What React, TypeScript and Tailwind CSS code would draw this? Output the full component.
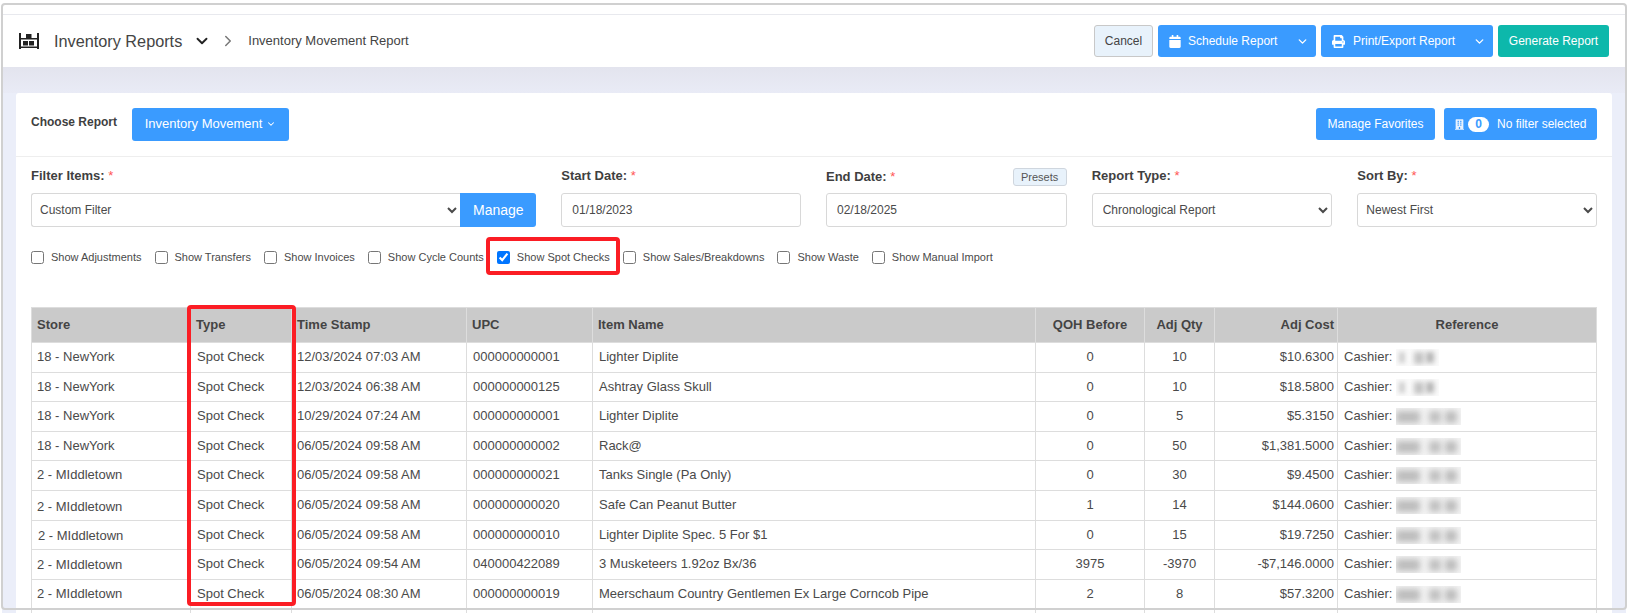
import { ChevronDown, ChevronRight } from 'lucide-react';
import { FaBuilding, FaCalendar, FaPrint } from 'react-icons/fa';

const tall = 'h-[30px] [&>td]:pb-[1px]';
const low = 'h-[29px]';

const rows = [
  { store: '18 - NewYork', sc: 'pl-[5px]', time: '12/03/2024 07:03 AM', upc: '000000000001', item: 'Lighter Diplite', qoh: '0', qty: '10', cost: '$10.6300', blur: 'short', h: tall },
  { store: '18 - NewYork', sc: 'pl-[5px]', time: '12/03/2024 06:38 AM', upc: '000000000125', item: 'Ashtray Glass Skull', qoh: '0', qty: '10', cost: '$18.5800', blur: 'short', h: low },
  { store: '18 - NewYork', sc: 'pl-[5px]', time: '10/29/2024 07:24 AM', upc: '000000000001', item: 'Lighter Diplite', qoh: '0', qty: '5', cost: '$5.3150', blur: 'long', h: tall },
  { store: '18 - NewYork', sc: 'pl-[5px]', time: '06/05/2024 09:58 AM', upc: '000000000002', item: 'Rack@', qoh: '0', qty: '50', cost: '$1,381.5000', blur: 'long', h: low },
  { store: '2 - MIddletown', sc: 'pl-[5px]', time: '06/05/2024 09:58 AM', upc: '000000000021', item: 'Tanks Single (Pa Only)', qoh: '0', qty: '30', cost: '$9.4500', blur: 'long', h: tall },
  { store: '2 - MIddletown', sc: 'pl-[5px] pt-[4px]', time: '06/05/2024 09:58 AM', upc: '000000000020', item: 'Safe Can Peanut Butter', qoh: '1', qty: '14', cost: '$144.0600', blur: 'long', h: tall },
  { store: '2 - MIddletown', sc: 'pl-[6px] pt-[2px]', time: '06/05/2024 09:58 AM', upc: '000000000010', item: 'Lighter Diplite Spec. 5 For $1', qoh: '0', qty: '15', cost: '$19.7250', blur: 'long', h: low },
  { store: '2 - MIddletown', sc: 'pl-[5px] pt-[2px]', time: '06/05/2024 09:54 AM', upc: '040000422089', item: '3 Musketeers 1.92oz Bx/36', qoh: '3975', qty: '-3970', cost: '-$7,146.0000', blur: 'long', h: tall },
  { store: '2 - MIddletown', sc: 'pl-[5px]', time: '06/05/2024 08:30 AM', upc: '000000000019', item: 'Meerschaum Country Gentlemen Ex Large Corncob Pipe', qoh: '2', qty: '8', cost: '$57.3200', blur: 'long', h: low },
];

const filters = ['Show Adjustments', 'Show Transfers', 'Show Invoices', 'Show Cycle Counts', 'Show Spot Checks', 'Show Sales/Breakdowns', 'Show Waste', 'Show Manual Import'];

function ShelfIcon() {
  return (
    <svg viewBox="0 0 20 16" className="w-5 h-4 text-[#222]" fill="currentColor">
      <path d="M0 0h2v16H0zM18 0h2v16h-2zM2 13.5h16V15H2zM2 5h16v1.5H2zM7 1h5.5v4H7zM4 8h5v4.5H4zM10 8h5v4.5h-5z" />
    </svg>
  );
}

function BlurName({ kind }: { kind: string }) {
  if (kind === 'short') {
    return (
      <span className="inline-flex w-[43px] h-[17px] overflow-hidden items-center gap-[9px] align-middle bg-[#fafafa]">
        <span className="w-[6px] h-[11px] bg-[#d0d0d0] blur-[2px] ml-[3px]" />
        <span className="w-[10px] h-[12px] bg-[#c4c4c4] blur-[2.5px]" />
        <span className="w-[8px] h-[11px] bg-[#b4b4b4] blur-[2.5px] -ml-[7px]" />
      </span>
    );
  }
  return (
    <span className="inline-flex w-[65px] h-[17px] overflow-hidden items-center gap-[9px] align-middle bg-[#f4f4f4]">
      <span className="w-[24px] h-[12px] bg-[#bcbcbc] blur-[3px]" />
      <span className="w-[12px] h-[12px] bg-[#c0c0c0] blur-[3px]" />
      <span className="w-[12px] h-[12px] bg-[#bcbcbc] blur-[3px] -ml-[5px]" />
    </span>
  );
}

function Label({ text }: { text: string }) {
  return (
    <label className="block text-[13px] font-bold text-[#3f3f3f] leading-4">
      {text} <span className="text-[#f55] font-normal">*</span>
    </label>
  );
}

export default function App() {
  return (
    <div className="relative w-[1628px] h-[613px] overflow-hidden bg-white pt-[4px] pl-[2px] pr-[2px] text-[#4a4a4a] font-['Liberation_Sans',Arial,sans-serif]">
      <div className="h-[11px] border-b border-[#e8e9ee]" />
      <header className="h-[52px] flex items-center pl-[17px] pr-[17px]">
        <ShelfIcon />
        <span className="ml-[15px] text-[16.25px] text-[#444]">Inventory Reports</span>
        <ChevronDown className="ml-[11px] w-[18px] h-[18px] text-[#222]" strokeWidth={2.5} />
        <ChevronRight className="ml-[8px] w-[18px] h-[18px] text-[#777]" strokeWidth={2} />
        <span className="ml-[11px] text-[13px] text-[#444]">Inventory Movement Report</span>
        <div className="ml-auto flex items-center gap-[5px] text-[12px] text-white">
          <button className="h-[32px] w-[59px] rounded-[3px] border border-[#c8c8c8] bg-[#e8f2fb] text-[#444]">Cancel</button>
          <div className="h-[32px] w-[158px] rounded-[3px] bg-[#3a9bff] flex items-center pl-[11px]">
            <FaCalendar className="w-[12px] h-[13px]" />
            <span className="ml-[7px]">Schedule Report</span>
            <ChevronDown className="ml-auto mr-[7px] w-[13px] h-[13px]" strokeWidth={2.5} />
          </div>
          <div className="h-[32px] w-[172px] rounded-[3px] bg-[#3a9bff] flex items-center pl-[11px]">
            <FaPrint className="w-[13px] h-[13px]" />
            <span className="ml-[8px]">Print/Export Report</span>
            <ChevronDown className="ml-auto mr-[7px] w-[13px] h-[13px]" strokeWidth={2.5} />
          </div>
          <button className="h-[32px] w-[111px] rounded-[3px] bg-[#0db8ab]">Generate Report</button>
        </div>
      </header>
      <div className="bg-[#ebeef9] h-[546px]">
        <div className="h-[26px] bg-linear-to-b from-[#e3e4ee] to-[#e9ebf6]" />
        <main className="mx-[14px] bg-white rounded-t-[3px] h-[520px] overflow-hidden">
          <div className="h-[64px] pb-[1px] flex items-center pl-[15px] pr-[15px] border-b border-[#eeeeee]">
            <span className="text-[12px] font-bold text-[#3f3f3f] -mt-[4px]">Choose Report</span>
            <button className="ml-[15px] h-[33px] w-[157px] rounded-[3px] bg-[#3a9bff] text-white text-[13px] flex items-center justify-center gap-[4px]">
              Inventory Movement
              <ChevronDown className="w-[10px] h-[10px]" strokeWidth={2.5} />
            </button>
            <div className="ml-auto flex gap-[9px] text-[12px] text-white">
              <button className="h-[32px] w-[119px] rounded-[3px] bg-[#3a9bff]">Manage Favorites</button>
              <div className="h-[32px] w-[153px] rounded-[3px] bg-[#3a9bff] flex items-center pl-[11px]">
                <FaBuilding className="w-[9px] h-[13px] text-[#e8f2ff]" />
                <span className="ml-[4px] w-[21px] h-[15px] rounded-full bg-white text-[#3a9bff] font-bold text-[12px] flex items-center justify-center">0</span>
                <span className="ml-[8px]">No filter selected</span>
              </div>
            </div>
          </div>
          <div className="px-[15px] pt-[11px] flex gap-[25px] items-start">
            <div className="w-[506px]">
              <Label text="Filter Items:" />
              <div className="mt-[9px] flex h-[34px]">
                <select className="flex-1 min-w-0 rounded-l-[3px] border border-r-0 border-[#d8d8d8] bg-white pl-[4px] text-[12px] text-[#4a4a4a]">
                  <option>Custom Filter</option>
                </select>
                <button className="w-[76px] rounded-r-[3px] bg-[#3a9bff] text-white text-[14px]">Manage</button>
              </div>
            </div>
            <div className="w-[240px]">
              <Label text="Start Date:" />
              <input readOnly value="01/18/2023" className="mt-[9px] h-[34px] w-full rounded-[3px] border border-[#d8d8d8] pl-[10px] text-[12px] text-[#4a4a4a]" />
            </div>
            <div className="w-[241px]">
              <div className="flex items-center justify-between">
                <Label text="End Date:" />
                <button className="h-[18px] w-[54px] rounded-[3px] border border-[#cfd6de] bg-[#e8f2fb] text-[11px] text-[#555]">Presets</button>
              </div>
              <input readOnly value="02/18/2025" className="mt-[7px] h-[34px] w-full rounded-[3px] border border-[#d8d8d8] pl-[10px] text-[12px] text-[#4a4a4a]" />
            </div>
            <div className="w-[241px]">
              <Label text="Report Type:" />
              <select className="mt-[9px] h-[34px] w-full rounded-[3px] border border-[#d8d8d8] bg-white pl-[6px] text-[12px] text-[#4a4a4a]">
                <option>Chronological Report</option>
              </select>
            </div>
            <div className="w-[240px]">
              <Label text="Sort By:" />
              <select className="mt-[9px] h-[34px] w-full rounded-[3px] border border-[#d8d8d8] bg-white pl-[4px] text-[12px] text-[#4a4a4a]">
                <option>Newest First</option>
              </select>
            </div>
          </div>
          <div className="mt-[22px] pl-[15px] flex items-center gap-[13px] h-[16px] text-[11px]">
            {filters.map((f) => (
              <label key={f} className="flex items-center gap-[7px]">
                <input type="checkbox" readOnly checked={f === 'Show Spot Checks'} className="w-[13px] h-[13px] m-0" />
                {f}
              </label>
            ))}
          </div>
          <div className="mt-[42px] pl-[15px]">
            <table className="table-fixed border-collapse w-[1566px] text-[13px]">
              <thead>
                <tr className="h-[35px] bg-[#cacaca] text-[#444] font-bold">
                  <th className="w-[159px] border border-[#ddd] pl-[5px] text-left">Store</th>
                  <th className="w-[101px] border border-[#ddd] pl-[5px] text-left">Type</th>
                  <th className="w-[175px] border border-[#ddd] pl-[5px] text-left">Time Stamp</th>
                  <th className="w-[126px] border border-[#ddd] pl-[5px] text-left">UPC</th>
                  <th className="w-[443px] border border-[#ddd] pl-[5px] text-left">Item Name</th>
                  <th className="w-[109px] border border-[#ddd]">QOH Before</th>
                  <th className="w-[70px] border border-[#ddd]">Adj Qty</th>
                  <th className="w-[123px] border border-[#ddd] pr-[3px] text-right">Adj Cost</th>
                  <th className="border border-[#ddd]">Reference</th>
                </tr>
              </thead>
              <tbody>
                {rows.map((r, i) => (
                  <tr key={i} className={r.h}>
                    <td className={`border border-[#ddd] ${r.sc}`}>{r.store}</td>
                    <td className="border border-[#ddd] pl-[6px]">Spot Check</td>
                    <td className="border border-[#ddd] pl-[5px]">{r.time}</td>
                    <td className="border border-[#ddd] pl-[6px]">{r.upc}</td>
                    <td className="border border-[#ddd] pl-[6px]">{r.item}</td>
                    <td className="border border-[#ddd] text-center">{r.qoh}</td>
                    <td className="border border-[#ddd] text-center">{r.qty}</td>
                    <td className="border border-[#ddd] pr-[3px] text-right">{r.cost}</td>
                    <td className="border border-[#ddd] pl-[6px]">
                      Cashier: <BlurName kind={r.blur} />
                    </td>
                  </tr>
                ))}
                <tr className="h-[29px]">
                  <td className="border border-[#ddd]" />
                  <td className="border border-[#ddd]" />
                  <td className="border border-[#ddd]" />
                  <td className="border border-[#ddd]" />
                  <td className="border border-[#ddd]" />
                  <td className="border border-[#ddd]" />
                  <td className="border border-[#ddd]" />
                  <td className="border border-[#ddd]" />
                  <td className="border border-[#ddd]" />
                </tr>
              </tbody>
            </table>
          </div>
        </main>
      </div>
      {/* window frame and the red annotation boxes lie over the page */}
      <div className="absolute left-[1px] top-[3px] w-[1626px] h-[607px] rounded-[4px] border-2 border-[#d0d0d0] pointer-events-none" />
      <div className="absolute left-[486px] top-[237px] w-[134px] h-[38px] rounded-[4px] border-[4px] border-[#fb1d24] pointer-events-none" />
      <div className="absolute left-[187px] top-[305px] w-[109px] h-[301px] rounded-[4px] border-[4px] border-[#fb1d24] pointer-events-none" />
    </div>
  );
}
